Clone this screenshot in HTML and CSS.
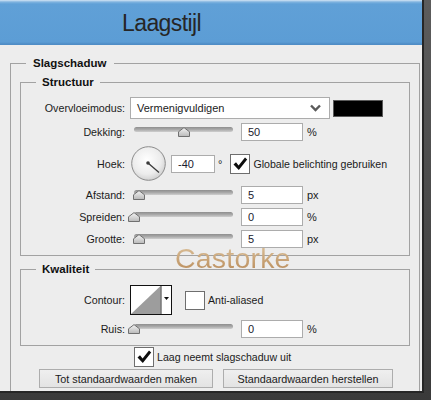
FILE: index.html
```html
<!DOCTYPE html>
<html lang="nl">
<head>
<meta charset="UTF-8">
<title>Laagstijl</title>
<link rel="stylesheet" href="styles.css">
</head>
<body>

<div class="window">
    <header class="titlebar"><h1>Laagstijl</h1></header>

    <div class="content">
        <fieldset class="group outer">
            <legend>Slagschaduw</legend>

            <fieldset class="group structure">
                <legend>Structuur</legend>

                <div class="row row-blend">
                    <label class="lbl">Overvloeimodus:</label>
                    <div class="select">
                        <span>Vermenigvuldigen</span>
                        <svg class="chevron" width="11" height="8" viewBox="0 0 11 8"><polyline points="1,1.5 5.5,6 10,1.5" fill="none" stroke="#5a5a5a" stroke-width="2.4"/></svg>
                    </div>
                    <span class="swatch"></span>
                </div>

                <div class="row">
                    <label class="lbl">Dekking:</label>
                    <div class="slider"><div class="rail"><span class="track"></span><svg class="thumb" style="left:50%" width="12" height="10" viewBox="0 0 12 10"><use href="#thumb"/></svg></div></div>
                    <input class="num" type="text" value="50"><span class="unit">%</span>
                </div>

                <div class="row row-angle">
                    <label class="lbl">Hoek:</label>
                    <svg class="dial" width="35" height="35" viewBox="0 0 35 35">
                        <defs>
                            <radialGradient id="dialFill" cx="45%" cy="40%" r="60%">
                                <stop offset="0" stop-color="#ffffff"/>
                                <stop offset="0.7" stop-color="#ececec"/>
                                <stop offset="1" stop-color="#d2d2d2"/>
                            </radialGradient>
                        </defs>
                        <circle cx="17.5" cy="17.5" r="16.8" fill="url(#dialFill)" stroke="#8c8c8c" stroke-width="1"/>
                        <line x1="17" y1="17" x2="28" y2="26.5" stroke="#3a3a3a" stroke-width="1.3"/>
                        <circle cx="17" cy="17" r="1.8" fill="#3a3a3a"/>
                    </svg>
                    <input class="num num-angle" type="text" value="-40"><span class="unit deg">°</span>
                    <span class="check checked"><svg width="18" height="18" viewBox="0 0 18 18"><use href="#tick"/></svg></span>
                    <span class="check-label">Globale belichting gebruiken</span>
                </div>

                <div class="row">
                    <label class="lbl">Afstand:</label>
                    <div class="slider"><div class="rail"><span class="track"></span><svg class="thumb" style="left:5%" width="12" height="10" viewBox="0 0 12 10"><use href="#thumb"/></svg></div></div>
                    <input class="num" type="text" value="5"><span class="unit">px</span>
                </div>

                <div class="row">
                    <label class="lbl">Spreiden:</label>
                    <div class="slider"><div class="rail"><span class="track"></span><svg class="thumb" style="left:0%" width="12" height="10" viewBox="0 0 12 10"><use href="#thumb"/></svg></div></div>
                    <input class="num" type="text" value="0"><span class="unit">%</span>
                </div>

                <div class="row">
                    <label class="lbl">Grootte:</label>
                    <div class="slider"><div class="rail"><span class="track"></span><svg class="thumb" style="left:5%" width="12" height="10" viewBox="0 0 12 10"><use href="#thumb"/></svg></div></div>
                    <input class="num" type="text" value="5"><span class="unit">px</span>
                </div>
            </fieldset>

            <fieldset class="group quality">
                <legend>Kwaliteit</legend>

                <div class="row row-contour">
                    <label class="lbl">Contour:</label>
                    <svg class="contour" width="42" height="30" viewBox="0 0 42 30">
                        <rect x="0.5" y="0.5" width="41" height="29" fill="#fff" stroke="#111"/>
                        <polygon points="1,29 30.5,1 30.5,29" fill="#9d9d9d"/>
                        <line x1="31" y1="1" x2="31" y2="29" stroke="#333" stroke-width="1"/>
                        <polygon points="34,12 39,12 36.5,15" fill="#111"/>
                    </svg>
                    <span class="check check-aa"></span>
                    <span class="check-label">Anti-aliased</span>
                </div>

                <div class="row row-noise">
                    <label class="lbl">Ruis:</label>
                    <div class="slider"><div class="rail"><span class="track"></span><svg class="thumb" style="left:0%" width="12" height="10" viewBox="0 0 12 10"><use href="#thumb"/></svg></div></div>
                    <input class="num" type="text" value="0"><span class="unit">%</span>
                </div>
            </fieldset>

            <div class="row row-knockout">
                <span class="check checked"><svg width="18" height="18" viewBox="0 0 18 18"><use href="#tick"/></svg></span>
                <span class="check-label">Laag neemt slagschaduw uit</span>
            </div>

            <div class="buttons">
                <button class="btn btn-default">Tot standaardwaarden maken</button>
                <button class="btn btn-reset">Standaardwaarden herstellen</button>
            </div>
        </fieldset>
    </div>

    <div class="watermark">Castorke</div>
</div>

<svg class="defs" width="0" height="0">
    <defs>
        <linearGradient id="thumbFill" x1="0" y1="0" x2="0" y2="1">
            <stop offset="0" stop-color="#f4f4f4"/>
            <stop offset="1" stop-color="#b9b9b9"/>
        </linearGradient>
        <symbol id="thumb" viewBox="0 0 12 10">
            <path d="M0.5 4.8 L6 0.6 L11.5 4.8 V9.5 H0.5 Z" fill="url(#thumbFill)" stroke="#707070" stroke-width="1"/>
        </symbol>
        <symbol id="tick" viewBox="0 0 18 18">
            <path d="M2.5 9.5 L5 7.3 L7.6 10.4 L14 2.6 L16.2 4.6 L7.8 15 Z" fill="#0d0d0d"/>
        </symbol>
    </defs>
</svg>

</body>
</html>
```

FILE: styles.css
```css
* {
    box-sizing: border-box;
}
html, body {
    margin: 0;
    padding: 0;
}
body {
    width: 431px;
    height: 400px;
    overflow: hidden;
    background: linear-gradient(to bottom, #5c5c5c, #3a3a3a);
    font-family: "Liberation Sans", Arial, sans-serif;
    font-size: 10.7px;
    color: #1b1b1b;
}
.defs {
    position: absolute;
}

.window {
    position: relative;
    width: 424px;
    height: 393px;
    background-color: #ededed;
    border-right: 2px solid #262626;
    border-bottom: 2px solid #262626;
    overflow: hidden;
}
.titlebar {
    height: 45px;
    padding: 12px 0 0 122px;
    background: linear-gradient(to bottom, #d4e5f5 0, #80b3df 2px, #60a0d7 4px, #5c9dd5 42px, #4f8dc6 44px);
}
.titlebar h1 {
    margin: 0;
    font-family: "Liberation Sans", Arial, sans-serif;
    font-weight: normal;
    font-size: 23px;
    line-height: 23px;
    letter-spacing: -0.6px;
    color: #262626;
}
.content {
    padding: 11px 0 0 10px;
}

/* groups */
.group {
    margin: 0;
    padding: 0;
    min-width: 0;
    border: 1px solid #a2a2a2;
}
.group > legend {
    margin-left: 15px;
    padding: 0 6px;
    font-weight: bold;
    font-size: 11.5px;
    line-height: 15px;
    color: #111;
}
.outer {
    width: 410px;
    height: 360px;
    padding: 0 9px;
}
.outer > legend {
    margin-left: 6px;
    padding: 0 7px;
}
.structure {
    margin-top: 4px;
    padding: 7px 0 7px;
}
.quality {
    margin-top: 6px;
    padding: 8px 0 7px;
}

/* rows */
.row {
    display: flex;
    align-items: center;
    height: 18px;
    margin-top: 4px;
}
.lbl {
    flex: none;
    width: 104px;
    margin-right: 5px;
    text-align: right;
}
.row-blend {
    height: 22px;
    margin-top: 0;
}
.row-angle {
    height: 35px;
    margin-top: 5px;
}
.row-angle + .row {
    margin-top: 5px;
}
.row-contour {
    height: 30px;
    margin-top: 0;
}
.row-noise {
    margin-top: 5px;
}
.row-knockout {
    height: 20px;
    margin-top: 1px;
    padding-left: 114px;
}

.select {
    display: flex;
    align-items: center;
    justify-content: space-between;
    width: 200px;
    height: 22px;
    padding: 0 8px 0 6px;
    background-color: #fff;
    border: 1px solid #acacac;
    font-size: 11px;
}
.swatch {
    width: 50px;
    height: 17px;
    margin-left: 3px;
    background-color: #000;
    border: 1px solid #5a5a5a;
}

.slider {
    width: 104px;
    height: 10px;
    padding-left: 4px;
    margin-right: 7px;
    margin-top: -1px;
}
.rail {
    position: relative;
    width: 99px;
    height: 10px;
}
.track {
    display: block;
    height: 5px;
    border-radius: 3px;
    background: linear-gradient(to bottom, #8e8e8e, #a9a9a9 50%, #cfcfcf);
}
.thumb {
    position: absolute;
    top: 0;
    margin-left: -6px;
}

.num {
    width: 62px;
    height: 18px;
    padding: 0 0 0 6px;
    border: 1px solid #acacac;
    background-color: #fff;
    font-family: "Liberation Sans", Arial, sans-serif;
    font-size: 11px;
    color: #1a1a2e;
}
.unit {
    margin-left: 4px;
    font-size: 11px;
}
.dial {
    margin-left: 1px;
    margin-right: 5px;
}
.num-angle {
    width: 44px;
}
.deg {
    margin-left: 3px;
}

.check {
    display: flex;
    align-items: center;
    justify-content: center;
    width: 20px;
    height: 20px;
    background-color: #fff;
    border: 1px solid #6e6e6e;
}
.row-angle .check {
    margin-left: 8px;
}
.check-aa {
    margin-left: 13px;
    height: 19px;
}
.check-label {
    margin-left: 3px;
    font-size: 10.6px;
}

.buttons {
    display: flex;
    gap: 10px;
    margin-top: 2px;
    padding-left: 19px;
}
.btn {
    height: 19px;
    padding: 0;
    background: linear-gradient(to bottom, #efefef, #e3e3e3);
    border: 1px solid #adadad;
    font-family: "Liberation Sans", Arial, sans-serif;
    font-size: 10.8px;
    color: #1b1b1b;
}
.btn-default {
    width: 174px;
}
.btn-reset {
    width: 170px;
}

.watermark {
    position: absolute;
    left: 175px;
    top: 244px;
    font-family: "Liberation Sans", Arial, sans-serif;
    font-size: 28.5px;
    line-height: 29px;
    letter-spacing: 0.2px;
    background: linear-gradient(to bottom, #dcc29c, #b88a58);
    -webkit-background-clip: text;
    background-clip: text;
    color: transparent;
}
```
